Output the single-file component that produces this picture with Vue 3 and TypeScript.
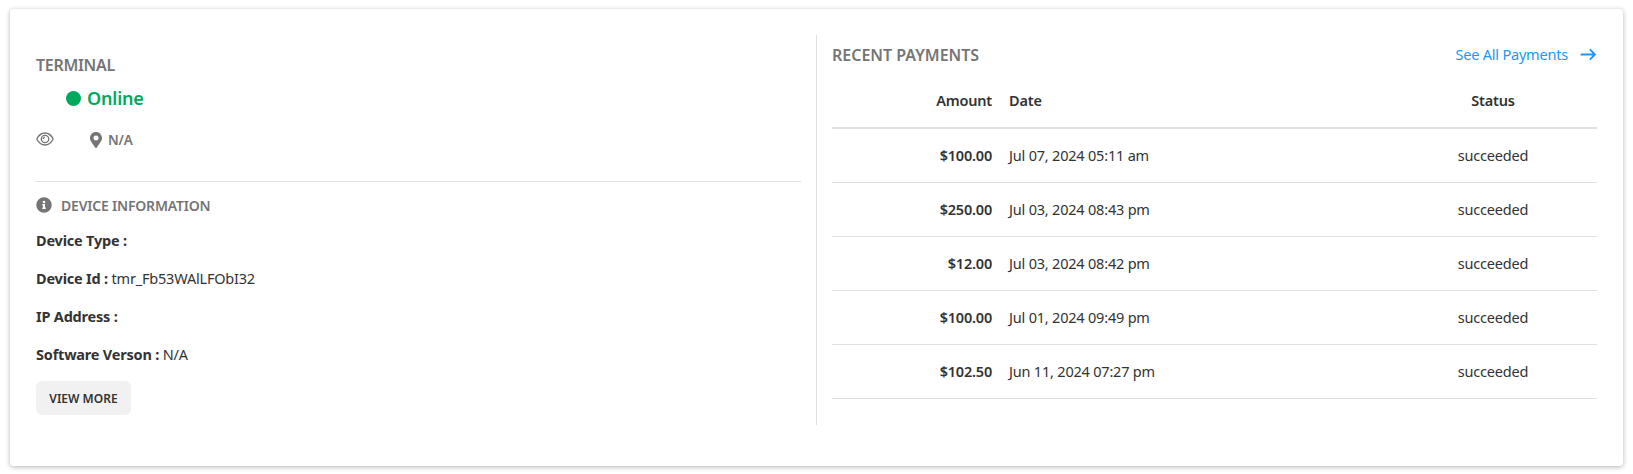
<script setup lang="ts">
interface Payment { amount: string; date: string; status: string }
const payments: Payment[] = [
  { amount: '$100.00', date: 'Jul 07, 2024 05:11 am', status: 'succeeded' },
  { amount: '$250.00', date: 'Jul 03, 2024 08:43 pm', status: 'succeeded' },
  { amount: '$12.00', date: 'Jul 03, 2024 08:42 pm', status: 'succeeded' },
  { amount: '$100.00', date: 'Jul 01, 2024 09:49 pm', status: 'succeeded' },
  { amount: '$102.50', date: 'Jun 11, 2024 07:27 pm', status: 'succeeded' },
]
</script>

<template>
  <div class="page">
    <section class="card">
      <div class="left">
        <h2 class="title">TERMINAL</h2>
        <div class="online"><span class="dot"></span>Online</div>
        <div class="meta">
          <svg class="eye" viewBox="0 0 18 14" width="18" height="14" fill="none" stroke="#757575" stroke-width="1.300">
            <path d="M0.800 7C2.800 3 5.500 1 9 1s6.200 2 8.200 6c-2 4-4.700 6-8.200 6S2.800 11 0.800 7z" />
            <circle cx="9" cy="7" r="3.700" />
            <path d="M7.300 7A1.700 1.700 0 0 1 9 5.300" />
          </svg>
          <svg class="pin" viewBox="0 0 384 512" width="12" height="16" fill="#757575">
            <path d="M192 0C86 0 0 86 0 192c0 77 27 99 172 310 10 14 30 14 40 0 145-211 172-233 172-310C384 86 298 0 192 0zm0 272a80 80 0 1 1 0-160 80 80 0 0 1 0 160z" />
          </svg>
          <span class="na">N/A</span>
        </div>
        <hr class="rule" />
        <div class="info-head">
          <svg viewBox="0 0 512 512" width="16" height="16" fill="#757575">
            <path d="M256 8a248 248 0 1 0 0 496 248 248 0 0 0 0-496zm0 110a42 42 0 1 1 0 84 42 42 0 0 1 0-84zm56 254c0 7-5 12-12 12h-88c-7 0-12-5-12-12v-24c0-7 5-12 12-12h12v-64h-12c-7 0-12-5-12-12v-24c0-7 5-12 12-12h64c7 0 12 5 12 12v100h12c7 0 12 5 12 12z" />
          </svg>
          <span>DEVICE INFORMATION</span>
        </div>
        <p class="field"><b>Device Type :</b></p>
        <p class="field"><b>Device Id :</b> tmr_Fb53WAlLFObI32</p>
        <p class="field"><b>IP Address :</b></p>
        <p class="field"><b>Software Verson :</b> N/A</p>
        <button class="more" type="button">VIEW MORE</button>
      </div>
      <div class="right">
        <div class="right-head">
          <h2 class="title">RECENT PAYMENTS</h2>
          <a class="all">See All Payments
            <svg viewBox="0 0 18 14" width="17" height="13" fill="none" stroke="#2196f3" stroke-width="2">
              <path d="M0.500 7H16M10.500 1.500 16 7l-5.500 5.500" />
            </svg>
          </a>
        </div>
        <table class="table">
          <thead>
            <tr>
              <th class="amount">Amount</th>
              <th class="date">Date</th>
              <th class="status">Status</th>
            </tr>
          </thead>
          <tbody>
            <tr v-for="p in payments" :key="p.date">
              <td class="amount">{{ p.amount }}</td>
              <td class="date">{{ p.date }}</td>
              <td class="status">{{ p.status }}</td>
            </tr>
          </tbody>
        </table>
      </div>
    </section>
  </div>
</template>

<style>
html, body { background: #fff; margin: 0; }
</style>

<style scoped>
.page {
  padding: 9px 10px 8px;
  font-family: "Noto Sans", "Open Sans", sans-serif;
  color: #333;
  font-size: 14.500px;
  letter-spacing: -0.2px;
}
.card {
  height: 457px;
  box-sizing: border-box;
  display: flex;
  align-items: flex-start;
  background: #fff;
  border-radius: 4px;
  box-shadow: 0 1px 5px rgba(0, 0, 0, 0.3);
  padding: 26px 26px 0 26px;
}
.left {
  width: 765px;
  flex: none;
  height: 390px;
  padding-right: 15px;
  border-right: 1px solid #e0e0e0;
}
.title {
  margin: 0;
  font-size: 16px;
  letter-spacing: 0;
  line-height: 20px;
  font-weight: 600;
  color: #757575;
}
.left > .title { margin-top: 20px; letter-spacing: -0.3px; }
.online {
  display: flex;
  align-items: center;
  gap: 6px;
  margin: 12px 0 0 30px;
  height: 22px;
  color: #00a95c;
  font-size: 18px;
  letter-spacing: -0.2px;
  font-weight: 600;
}
.dot { width: 15px; height: 15px; border-radius: 50%; background: #00a95c; }
.meta {
  display: flex;
  align-items: center;
  margin-top: 22px;
  height: 18px;
  color: #757575;
  font-size: 13.500px;
  font-weight: 600;
}
.eye { margin-bottom: 2px; }
.pin { margin-left: 36px; margin-bottom: 1px; }
.na { margin-left: 6px; }
.rule { border: 0; border-top: 1px solid #e0e0e0; margin: 32px 0 0; }
.info-head {
  display: flex;
  align-items: center;
  gap: 9px;
  margin-top: 14px;
  height: 18px;
  color: #757575;
  font-size: 14px;
  font-weight: 600;
}
.field { margin: 0 0 18px; line-height: 20px; height: 20px; }
.info-head + .field { margin-top: 16px; }
.field b { font-weight: 700; }
.more {
  display: block;
  width: 95px;
  height: 34px;
  margin-top: -1px;
  border: 0;
  border-radius: 6px;
  background: #f1f1f1;
  color: #333;
  font: 600 12px "Noto Sans", sans-serif;
}
.right { flex: 1; margin-left: 15px; }
.right-head {
  display: flex;
  align-items: center;
  justify-content: space-between;
  height: 20px;
  margin-top: 10px;
}
.all { display: flex; align-items: center; gap: 12px; color: #2196f3; font-size: 14.500px; padding-bottom: 2px; }
.table { width: 100%; border-collapse: collapse; table-layout: fixed; margin-top: 8px; }
th { height: 55px; padding: 0; font-weight: 600; border-bottom: 2px solid #e0e0e0; box-sizing: border-box; }
td { height: 54px; padding: 0; border-bottom: 1px solid #e0e0e0; box-sizing: border-box; }
.amount { width: 160px; text-align: right; font-weight: 600; }
.date { width: 397px; padding-left: 17px; text-align: left; }
.status { text-align: center; }
td.date, td.status { font-weight: 400; }
</style>
